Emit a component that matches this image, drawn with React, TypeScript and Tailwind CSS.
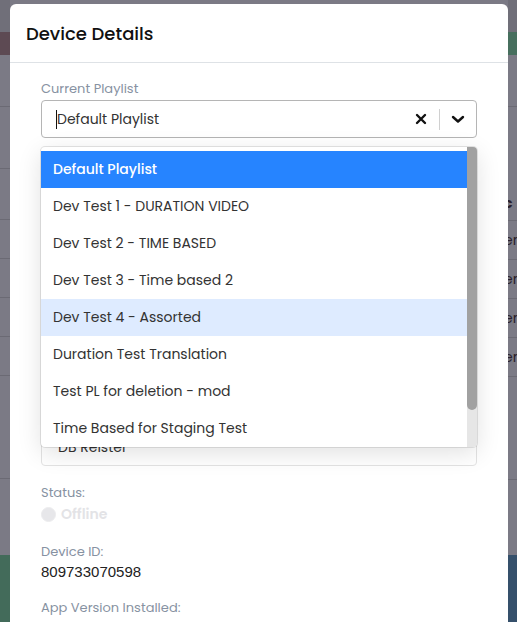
import React from 'react';

const options = [
  'Default Playlist',
  'Dev Test 1 - DURATION VIDEO',
  'Dev Test 2 - TIME BASED',
  'Dev Test 3 - Time based 2',
  'Dev Test 4 - Assorted',
  'Duration Test Translation',
  'Test PL for deletion - mod',
  'Time Based for Staging Test',
];

const hiddenFields = [
  { label: 'Device Name', value: 'Lobby Screen' },
  { label: 'Location', value: 'Main Office' },
  { label: 'Group', value: 'Staging' },
  { label: 'Registered By', value: 'DB Reister' },
];

const font = { fontFamily: 'Poppins, "Open Sans", sans-serif' };

const App: React.FC = () => {
  return (
    <div className="relative h-[622px] w-full overflow-hidden bg-[#7b7a85]" style={font}>
      {/* page underneath the overlay */}
      <div className="flex h-full">
        <div className="flex w-[10px] flex-col">
          <div className="h-[32px] bg-[#706f79]" />
          <div className="h-[23px] bg-[#5d4a53]" />
          <div className="h-[52px] border-b border-[#6b6a74]" />
          <div className="h-[62px] border-b border-[#6b6a74]" />
          <div className="h-[51px] border-b border-[#6b6a74]" />
          <div className="h-[39px] border-b border-[#6b6a74]" />
          <div className="h-[39px] border-b border-[#6b6a74]" />
          <div className="h-[39px] border-b border-[#6b6a74]" />
          <div className="h-[39px] border-b border-[#6b6a74]" />
          <div className="h-[103px] border-b border-[#6b6a74]" />
          <div className="flex-1" />
          <div className="h-[67px] bg-[#436b5a]" />
        </div>
        <div className="flex-1" />
        <div className="flex w-[9px] flex-col overflow-hidden text-[14px] text-[#2a1f2c]">
          <div className="h-[32px] bg-[#706f79]" />
          <div className="h-[23px] bg-[#476f5e]" />
          <div className="h-[52px] border-b border-[#6b6a74]" />
          <div className="h-[79px]" />
          <div className="flex h-[34px] items-center font-bold">
            <span className="-ml-[4px]">c</span>
          </div>
          {[0, 1, 2, 3].map((i) => (
            <div key={i} className="flex h-[39px] items-center border-t border-[#6b6a74]">
              <span className="-ml-[4px]">en</span>
            </div>
          ))}
          <div className="h-[103px] border-t border-[#6b6a74]" />
          <div className="flex-1 border-t border-[#6b6a74]" />
          <div className="h-[67px] bg-[#35506b]" />
        </div>
      </div>

      {/* modal */}
      <div className="absolute left-[10px] top-[4px] h-[700px] w-[498px] rounded-[6px] bg-white">
        <div className="flex h-[59px] items-center border-b border-[#dee2e6] px-4">
          <h2 className="text-[18px] font-medium text-[#111]">Device Details</h2>
        </div>

        <div className="px-[31px] pt-4">
          <div className="relative">
            <label className="block h-5 text-[13px] leading-5 text-[#8792a2]">Current Playlist</label>
            <div className="mt-px flex h-[38px] items-center rounded-[4px] border border-[#b5b5b5]">
              <div className="flex flex-1 items-center pl-[14px] text-[14px] text-[#333]">
                <span className="h-[19px] w-px bg-[#111]" />
                Default Playlist
              </div>
              <div className="flex items-center">
                <svg width="12" height="12" viewBox="0 0 12 12" className="mr-[12px]">
                  <path d="M2 2 L10 10 M10 2 L2 10" stroke="#111" strokeWidth="2.4" strokeLinecap="round" />
                </svg>
                <span className="h-[21px] w-px bg-[#d0d0d0]" />
                <svg width="14" height="10" viewBox="0 0 14 10" className="mx-[11px]">
                  <path d="M2 3 L7 7.5 L12 3" fill="none" stroke="#111" strokeWidth="2.4" strokeLinecap="round" strokeLinejoin="round" />
                </svg>
              </div>
            </div>

            {/* open menu */}
            <div className="absolute left-0 right-0 top-[68px] z-10 flex h-[300px] overflow-hidden rounded-[4px] bg-white shadow-[0_0_0_1px_rgba(0,0,0,0.1),0_6px_24px_rgba(0,0,0,0.12)]">
              <div className="flex-1 pt-[4px]">
                {options.map((opt, i) => (
                  <div
                    key={opt}
                    className={
                      'flex h-[37px] items-center px-[12px] text-[14px] ' +
                      (i === 0
                        ? 'bg-[#2684ff] font-medium text-white'
                        : i === 4
                          ? 'bg-[#deebff] text-[#333]'
                          : 'text-[#333]')
                    }
                  >
                    {opt}
                  </div>
                ))}
              </div>
              <div className="flex w-[10px] flex-col bg-[#e6e6e6]">
                <div className="h-[263px] rounded-b-[5px] bg-[#a1a1a1]" />
              </div>
            </div>
          </div>

          {hiddenFields.map((f) => (
            <div key={f.label} className="mt-[23px]">
              <label className="block h-5 text-[13px] leading-5 text-[#8792a2]">{f.label}</label>
              <div className="mt-px flex h-[38px] items-center rounded-[4px] border border-[#e3e3e3] pl-[16px] text-[14px] text-[#333]">
                {f.value}
              </div>
            </div>
          ))}

          <div className="mt-[17px] text-[13px] leading-5 text-[#8792a2]">Status:</div>
          <div className="mt-px flex h-5 items-center gap-[5px]">
            <span className="h-[15px] w-[15px] rounded-full border border-[#ececee] bg-[#e7e7ea]" />
            <span className="text-[14px] font-semibold text-[#e3e3e6]">Offline</span>
          </div>

          <div className="mt-[18px] text-[13px] leading-5 text-[#8792a2]">Device ID:</div>
          <div className="text-[15px] leading-5 text-[#222]" style={{ fontFamily: '"Liberation Sans", Arial, sans-serif' }}>
            809733070598
          </div>

          <div className="mt-[16px] text-[13px] leading-5 text-[#8792a2]">App Version Installed:</div>
        </div>
      </div>
    </div>
  );
};

export default App;
